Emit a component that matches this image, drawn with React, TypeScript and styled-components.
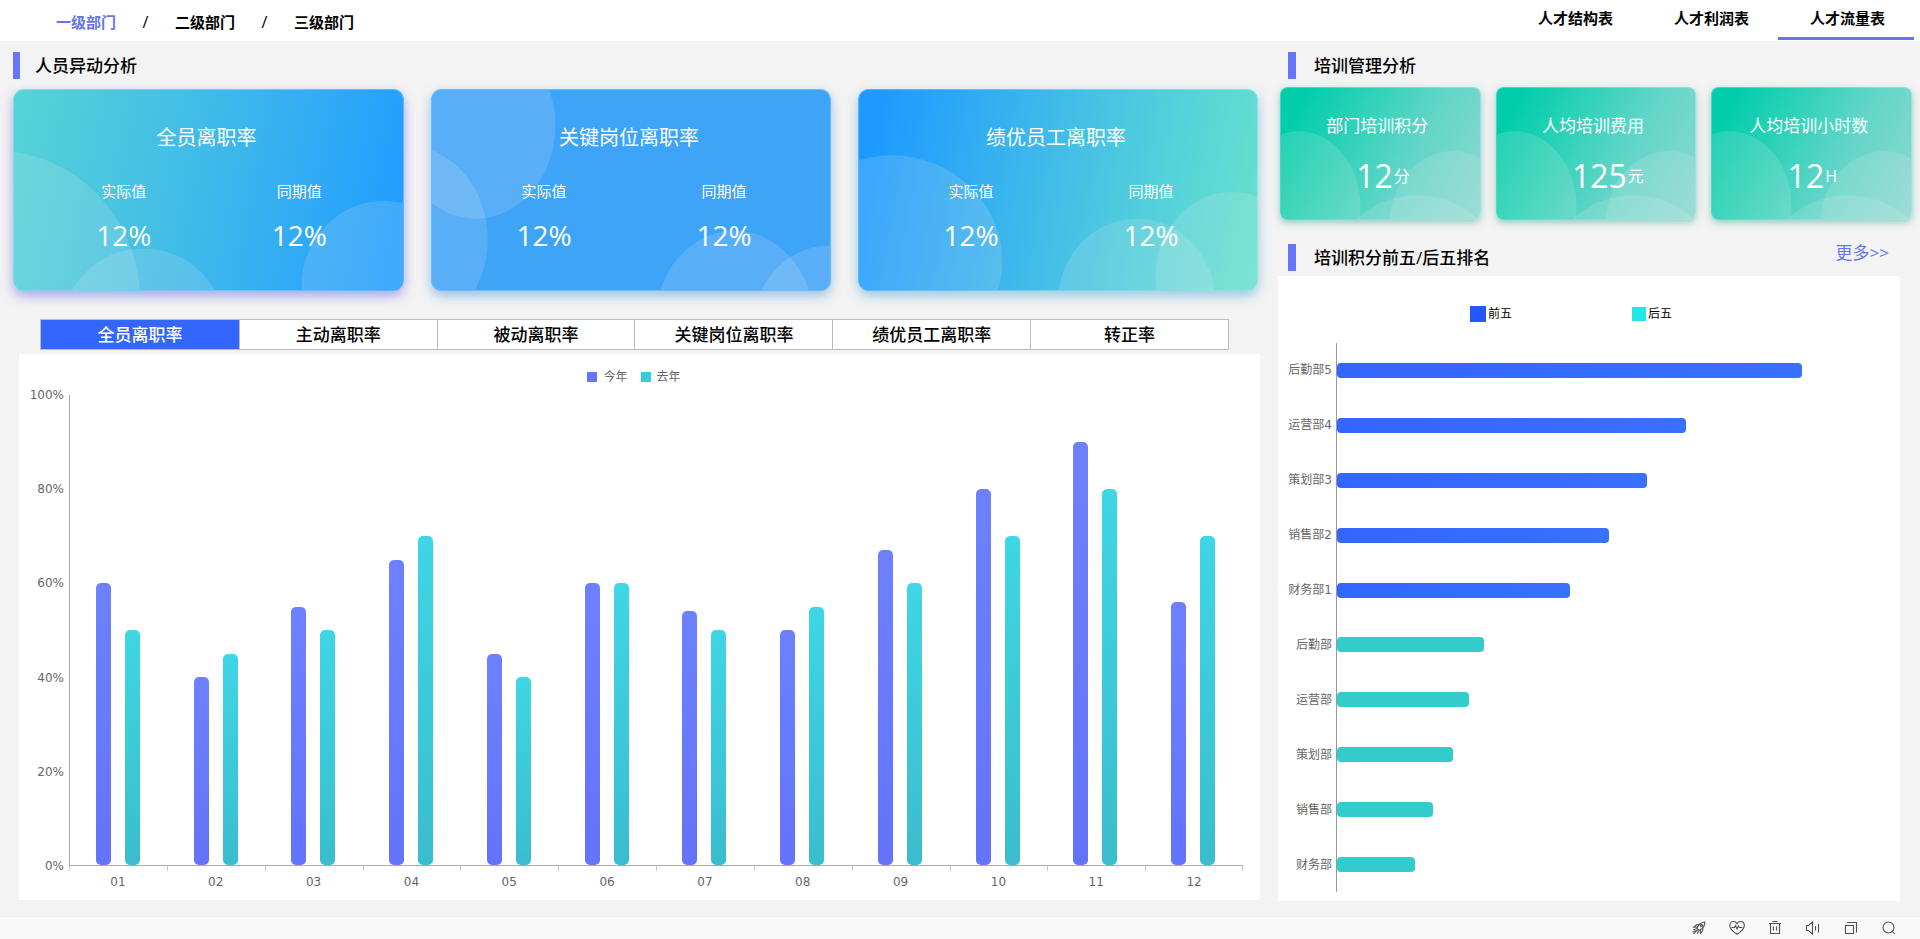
import React, { useState } from "react";
import styled, { createGlobalStyle } from "styled-components";

const GlobalStyle = createGlobalStyle`
  *, *::before, *::after { box-sizing: border-box; }
  body {
    margin: 0;
    background: #f3f3f3;
    color: #000;
    font-family: "Open Sans", "Noto Sans CJK SC", sans-serif;
  }
  button { font-family: inherit; padding: 0; border: 0; background: none; cursor: pointer; }
  a { color: inherit; text-decoration: none; }
  h2, h3, p { margin: 0; font-weight: 400; }
`;

const Page = styled.div`
  display: flex;
  flex-direction: column;
  min-height: 100vh;
`;

/* ---------- header ---------- */

const Header = styled.header`
  display: flex;
  justify-content: space-between;
  height: 41px;
  padding: 0 6px 0 56px;
  background: #fff;
`;

const Breadcrumb = styled.nav`
  display: flex;
  align-items: center;
  padding-top: 2px;
  font-size: 15px;
`;

const Crumb = styled.a<{ $active?: boolean }>`
  color: ${(p) => (p.$active ? "#6675ee" : "#000")};
  font-weight: 700;
`;

const Slash = styled.span`
  width: 59px;
  font-size: 16px;
  text-align: center;
`;

const ReportTabs = styled.nav`
  display: flex;
  height: 40px;
`;

const ReportTab = styled.a<{ $active?: boolean }>`
  width: 136px;
  padding-left: 3px;
  border-bottom: 3px solid ${(p) => (p.$active ? "#6675ee" : "transparent")};
  font-size: 15px;
  font-weight: 700;
  line-height: 37px;
  text-align: center;
`;

/* ---------- page columns ---------- */

const Main = styled.main`
  flex: 1;
  display: grid;
  grid-template-columns: minmax(0, 21fr) minmax(0, 11fr);
`;

const LeftColumn = styled.section`
  display: flex;
  flex-direction: column;
  padding: 11px 0 16px 13px;
`;

const RightColumn = styled.section`
  display: flex;
  flex-direction: column;
  padding: 11px 8px 15px 18px;
`;

const SectionHead = styled.div<{ $indent?: boolean }>`
  display: flex;
  justify-content: space-between;
  height: 27px;
  padding-left: ${(p) => (p.$indent ? "10px" : "0")};
`;

const SectionTitle = styled.h2<{ $wide?: boolean }>`
  padding-left: ${(p) => (p.$wide ? "18px" : "15px")};
  border-left: ${(p) => (p.$wide ? "8px" : "7px")} solid #6675fb;
  font-size: 17px;
  font-weight: 500;
  line-height: 27px;
`;

const MoreLink = styled.a`
  padding-right: 23px;
  color: #6675ee;
  font-size: 17px;
  line-height: 17px;
`;

/* ---------- turnover cards ---------- */

const RateCards = styled.div`
  display: grid;
  grid-template-columns: 391fr 400fr 400fr;
  gap: 27px;
  margin: 10px 2px 0 0;
`;

const RateCardBox = styled.article<{ $fill: string; $shadow: string }>`
  position: relative;
  height: 202px;
  padding-top: 35px;
  border-radius: 11px;
  background: ${(p) => p.$fill};
  box-shadow: 0 5px 12px ${(p) => p.$shadow};
  color: #fff;
`;

const Bubbles = styled.svg<{ $radius: string }>`
  position: absolute;
  inset: 0;
  width: 100%;
  height: 100%;
  border: 1px solid rgba(255, 255, 255, 0.25);
  border-radius: ${(p) => p.$radius};
`;

const RateTitle = styled.h3`
  position: relative;
  padding-right: 4px;
  font-size: 20px;
  line-height: 28px;
  text-align: center;
`;

const RateValues = styled.div`
  position: relative;
  display: grid;
  grid-template-columns: 1fr 1fr;
  padding: 29px 17px 0 23px;
  text-align: center;
`;

const RateLabel = styled.p`
  font-size: 15px;
  line-height: 20px;
`;

const RateNumber = styled.p`
  padding-top: 16px;
  font-size: 28px;
  line-height: 36px;
`;

/* ---------- training cards ---------- */

const TrainCards = styled.div`
  display: grid;
  grid-template-columns: repeat(3, 1fr);
  gap: 15px;
  margin: 8px 0 24px 2px;
`;

const TrainCard = styled.article`
  position: relative;
  height: 133px;
  padding-top: 26px;
  border-radius: 8px;
  background: linear-gradient(118deg, #00cdaa 10%, #2cd2b7 34%, #62d5c8 62%, #8fd9d3 100%);
  box-shadow: 0 3px 7px rgba(60, 170, 150, 0.5);
  color: #fff;
`;

const TrainTitle = styled.h3`
  position: relative;
  padding-right: 6px;
  font-size: 17px;
  line-height: 26px;
  text-align: center;
`;

const TrainValue = styled.p`
  position: relative;
  display: flex;
  align-items: center;
  gap: 1px;
  padding: 17px 0 0 38%;
  font-size: 32px;
  line-height: 40px;
`;

const Unit = styled.span`
  font-size: 16px;
`;

/* ---------- metric tabs ---------- */

const MetricTabs = styled.div`
  display: grid;
  grid-template-columns: repeat(6, 1fr);
  margin: 28px 31px 4px 27px;
  border: 1px solid #bbb;
`;

const MetricTab = styled.button<{ $active: boolean }>`
  height: 29px;
  background: ${(p) => (p.$active ? "#3366ff" : "#fff")};
  color: ${(p) => (p.$active ? "#fff" : "#000")};
  font-size: 17px;
  font-weight: 500;
  line-height: 29px;
  & + & { border-left: 1px solid #bbb; }
`;

/* ---------- column chart ---------- */

const ColumnPanel = styled.div`
  flex: 1;
  display: flex;
  flex-direction: column;
  margin-left: 6px;
  padding: 15px 17px 10px 0;
  background: #fff;
  color: #666;
  font-family: "DejaVu Sans", "Noto Sans CJK SC", sans-serif;
  font-size: 12px;
  line-height: 16px;
`;

const Legend = styled.div`
  display: flex;
  justify-content: center;
  gap: 13px;
  margin: 0 0 10px 6px;
`;

const LegendItem = styled.span`
  display: flex;
  align-items: center;
  gap: 6px;
`;

const Swatch = styled.i<{ $color: string; $size: number }>`
  width: ${(p) => p.$size}px;
  height: ${(p) => p.$size}px;
  background: ${(p) => p.$color};
`;

const ChartBody = styled.div`
  flex: 1;
  display: flex;
  min-height: 300px;
`;

const YAxis = styled.div`
  display: flex;
  flex-direction: column;
  justify-content: space-between;
  width: 50px;
  margin: -8px 0;
  padding-right: 5px;
  text-align: right;
`;

const Plot = styled.div`
  flex: 1;
  display: grid;
  grid-template-columns: repeat(12, 1fr);
  border-left: 1px solid #aaa;
  border-bottom: 1px solid #aaa;
`;

const Month = styled.div`
  display: flex;
  justify-content: center;
  align-items: flex-end;
  gap: 14px;
  padding-right: 2px;
`;

const Column = styled.div<{ $last?: boolean }>`
  width: 15px;
  border-radius: 5px;
  background: ${(p) =>
    p.$last ? "linear-gradient(#3fd6e5, #3abdce)" : "linear-gradient(#6d81ff, #6373fb)"};
`;

const XAxis = styled.div`
  display: grid;
  grid-template-columns: repeat(12, 1fr);
  margin-left: 50px;
  text-align: center;
`;

const XLabel = styled.span`
  padding-top: 3px;
`;

const Tick = styled.i`
  height: 5px;
  border-left: 1px solid #ccc;
  &:nth-child(12) { border-right: 1px solid #ccc; }
`;

/* ---------- ranking chart ---------- */

const RankPanel = styled.div`
  flex: 1;
  display: flex;
  flex-direction: column;
  margin: 5px 12px 0 0;
  padding: 30px 20px 9px 0;
  background: #fff;
  font-family: "DejaVu Sans", "Noto Sans CJK SC", sans-serif;
  font-size: 12px;
  line-height: 16px;
`;

const RankLegend = styled.div`
  display: flex;
  justify-content: center;
  gap: 120px;
  margin: 0 16px 21px 0;
`;

const RankLegendItem = styled(LegendItem)`
  gap: 2px;
`;

const RankRows = styled.div`
  flex: 1;
  display: grid;
  grid-template-rows: repeat(10, 1fr);
`;

const RankRow = styled.div`
  display: grid;
  grid-template-columns: 54px 1fr;
  column-gap: 4px;
  color: #666;
`;

const RankName = styled.span`
  align-self: center;
  text-align: right;
  white-space: nowrap;
`;

const RankTrack = styled.div`
  display: flex;
  align-items: center;
  border-left: 1px solid #999;
`;

const RankBar = styled.div<{ $top: boolean }>`
  height: 15px;
  border-radius: 4px;
  background: ${(p) => (p.$top ? "linear-gradient(90deg, #3366ff, #3870ff)" : "#33cccc")};
`;

/* ---------- footer ---------- */

const Footer = styled.footer`
  display: flex;
  justify-content: flex-end;
  align-items: center;
  gap: 22px;
  height: 23px;
  padding-right: 23px;
  border-top: 1px solid #eee;
  background: #f9f9f9;
`;

const ToolButton = styled.button`
  display: flex;
  width: 16px;
  height: 16px;
  svg { width: 16px; height: 16px; fill: none; stroke: #505050; stroke-width: 1.1; }
`;

/* ---------- data ---------- */

type Ellipse = [number, number, number, number];

const rateCards: { title: string; fill: string; shadow: string; width: number; bubbles: Ellipse[] }[] = [
  {
    title: "全员离职率",
    fill: "linear-gradient(101deg, #55d3d6 2%, #3fb9ea 50%, #229eff 95%)",
    shadow: "rgba(98, 104, 235, 0.55)",
    width: 391,
    bubbles: [[-20, 213, 147, 152], [130, 242, 82, 82], [372, 198, 83, 86]],
  },
  {
    title: "关键岗位离职率",
    fill: "#3ea4f8",
    shadow: "rgba(62, 145, 215, 0.5)",
    width: 400,
    bubbles: [[44, 36, 80, 94], [-24, 151, 80, 94], [304, 236, 80, 94], [399, 251, 80, 94]],
  },
  {
    title: "绩优员工离职率",
    fill: "linear-gradient(101deg, #1e9aff 6%, #42bce8 48%, #57d4d8 78%, #6ae1cd 100%)",
    shadow: "rgba(62, 160, 215, 0.5)",
    width: 400,
    bubbles: [[33, 173, 111, 107], [279, 214, 79, 84], [375, 187, 77, 84]],
  },
];

const trainCards = [
  { title: "部门培训积分", value: "12", unit: "分" },
  { title: "人均培训费用", value: "125", unit: "元" },
  { title: "人均培训小时数", value: "12", unit: "H" },
];

const trainBubbles: Ellipse[] = [[18, 120, 62, 76], [173, 139, 64, 75], [137, 192, 87, 83]];

const metrics = ["全员离职率", "主动离职率", "被动离职率", "关键岗位离职率", "绩优员工离职率", "转正率"];

const months: [string, number, number][] = [
  ["01", 60, 50], ["02", 40, 45], ["03", 55, 50], ["04", 65, 70],
  ["05", 45, 40], ["06", 60, 60], ["07", 54, 50], ["08", 50, 55],
  ["09", 67, 60], ["10", 80, 70], ["11", 90, 80], ["12", 56, 70],
];

const rankMax = 70;
const ranks: [string, number][] = [
  ["后勤部5", 60], ["运营部4", 45], ["策划部3", 40], ["销售部2", 35], ["财务部1", 30],
  ["后勤部", 19], ["运营部", 17], ["策划部", 15], ["销售部", 12.4], ["财务部", 10],
];

const tools = [
  {
    name: "加速",
    icon: (
      <>
        <path d="M6 8.500C6.800 5.600 9.600 2.400 13.800 2C14 5.600 11.200 9 8 10.500z" />
        <path d="M6.600 7L2.800 7.200L5.800 4.600l3 .2M9.200 9.800L9.400 13.500l2.300-2.600l.1-3.600" />
        <path d="M5.600 8.800L2.400 9.800M6.400 9.800L2.500 14M7.400 10.800L6.400 13.800M4.600 10.400L1.800 12.200" />
        <circle cx="10.500" cy="5.400" r="1" />
      </>
    ),
  },
  {
    name: "健康",
    icon: (
      <>
        <path d="M8 14.300C3.500 11.300.7 8.500.7 5.400C.7 3 2.400 1.500 4.400 1.500C6 1.500 7.200 2.300 8 3.600C8.800 2.300 10 1.500 11.600 1.500C13.600 1.500 15.300 3 15.300 5.400C15.300 8.500 12.500 11.300 8 14.300z" />
        <path d="M2.500 7.500h3l1-2l1.500 3.500l1.500-3l1 1.500h3" />
      </>
    ),
  },
  {
    name: "清理",
    icon: <path d="M2 3.500h12M5.500 1.500h5M3.500 3.500v10h9v-10M6.500 6.500v4M9.500 6.500v4" />,
  },
  {
    name: "声音",
    icon: <path d="M1.500 5.500h2l4-3.500v12l-4-3.500h-2zM10.500 6v4.500M13.500 4v8.500" />,
  },
  {
    name: "窗口",
    icon: <path d="M2.500 5.500h8v8h-8zM4 2.500h9.500v10" />,
  },
  {
    name: "搜索",
    icon: (
      <>
        <circle cx="7.500" cy="7.500" r="5.500" />
        <path d="M11.300 11.300l2.500 2.700" />
      </>
    ),
  },
];

function BubbleArt({ width, height, radius, items }: { width: number; height: number; radius: string; items: Ellipse[] }) {
  return (
    <Bubbles $radius={radius} viewBox={`0 0 ${width} ${height}`} preserveAspectRatio="none" aria-hidden="true">
      {items.map(([cx, cy, rx, ry], i) => (
        <ellipse key={i} cx={cx} cy={cy} rx={rx} ry={ry} fill="#f4f4f4" fillOpacity="0.15" />
      ))}
    </Bubbles>
  );
}

export default function App() {
  const [metric, setMetric] = useState(0);

  return (
    <Page lang="zh-CN">
      <GlobalStyle />
      <Header>
        <Breadcrumb aria-label="部门">
          <Crumb href="#" $active>一级部门</Crumb>
          <Slash>/</Slash>
          <Crumb href="#">二级部门</Crumb>
          <Slash>/</Slash>
          <Crumb href="#">三级部门</Crumb>
        </Breadcrumb>
        <ReportTabs aria-label="报表">
          <ReportTab href="#">人才结构表</ReportTab>
          <ReportTab href="#">人才利润表</ReportTab>
          <ReportTab href="#" $active>人才流量表</ReportTab>
        </ReportTabs>
      </Header>

      <Main>
        <LeftColumn>
          <SectionHead>
            <SectionTitle>人员异动分析</SectionTitle>
          </SectionHead>
          <RateCards>
            {rateCards.map((c) => (
              <RateCardBox key={c.title} $fill={c.fill} $shadow={c.shadow}>
                <BubbleArt width={c.width} height={202} radius="11px" items={c.bubbles} />
                <RateTitle>{c.title}</RateTitle>
                <RateValues>
                  {["实际值", "同期值"].map((label) => (
                    <div key={label}>
                      <RateLabel>{label}</RateLabel>
                      <RateNumber>12%</RateNumber>
                    </div>
                  ))}
                </RateValues>
              </RateCardBox>
            ))}
          </RateCards>

          <MetricTabs>
            {metrics.map((m, i) => (
              <MetricTab key={m} type="button" $active={i === metric} onClick={() => setMetric(i)}>
                {m}
              </MetricTab>
            ))}
          </MetricTabs>

          <ColumnPanel>
            <Legend>
              <LegendItem><Swatch $color="#6675fb" $size={10} />今年</LegendItem>
              <LegendItem><Swatch $color="#3dcad8" $size={10} />去年</LegendItem>
            </Legend>
            <ChartBody>
              <YAxis>
                {[100, 80, 60, 40, 20, 0].map((v) => <span key={v}>{v}%</span>)}
              </YAxis>
              <Plot>
                {months.map(([name, now, last]) => (
                  <Month key={name}>
                    <Column style={{ height: `${now}%` }} />
                    <Column $last style={{ height: `${last}%` }} />
                  </Month>
                ))}
              </Plot>
            </ChartBody>
            <XAxis>
              {months.map(([name]) => <Tick key={name} />)}
              {months.map(([name]) => <XLabel key={name}>{name}</XLabel>)}
            </XAxis>
          </ColumnPanel>
        </LeftColumn>

        <RightColumn>
          <SectionHead $indent>
            <SectionTitle $wide>培训管理分析</SectionTitle>
          </SectionHead>
          <TrainCards>
            {trainCards.map((c) => (
              <TrainCard key={c.title}>
                <BubbleArt width={200} height={133} radius="8px" items={trainBubbles} />
                <TrainTitle>{c.title}</TrainTitle>
                <TrainValue>{c.value}<Unit>{c.unit}</Unit></TrainValue>
              </TrainCard>
            ))}
          </TrainCards>

          <SectionHead $indent>
            <SectionTitle $wide>培训积分前五/后五排名</SectionTitle>
            <MoreLink href="#">更多&gt;&gt;</MoreLink>
          </SectionHead>
          <RankPanel>
            <RankLegend>
              <RankLegendItem><Swatch $color="#2259ff" $size={16} />前五</RankLegendItem>
              <RankLegendItem><Swatch $color="#22e6e6" $size={14} />后五</RankLegendItem>
            </RankLegend>
            <RankRows>
              {ranks.map(([name, value], i) => (
                <RankRow key={name}>
                  <RankName>{name}</RankName>
                  <RankTrack>
                    <RankBar $top={i < 5} style={{ width: `${(value / rankMax) * 100}%` }} />
                  </RankTrack>
                </RankRow>
              ))}
            </RankRows>
          </RankPanel>
        </RightColumn>
      </Main>

      <Footer>
        {tools.map((t) => (
          <ToolButton key={t.name} type="button" aria-label={t.name}>
            <svg viewBox="0 0 16 16" aria-hidden="true">{t.icon}</svg>
          </ToolButton>
        ))}
      </Footer>
    </Page>
  );
}
